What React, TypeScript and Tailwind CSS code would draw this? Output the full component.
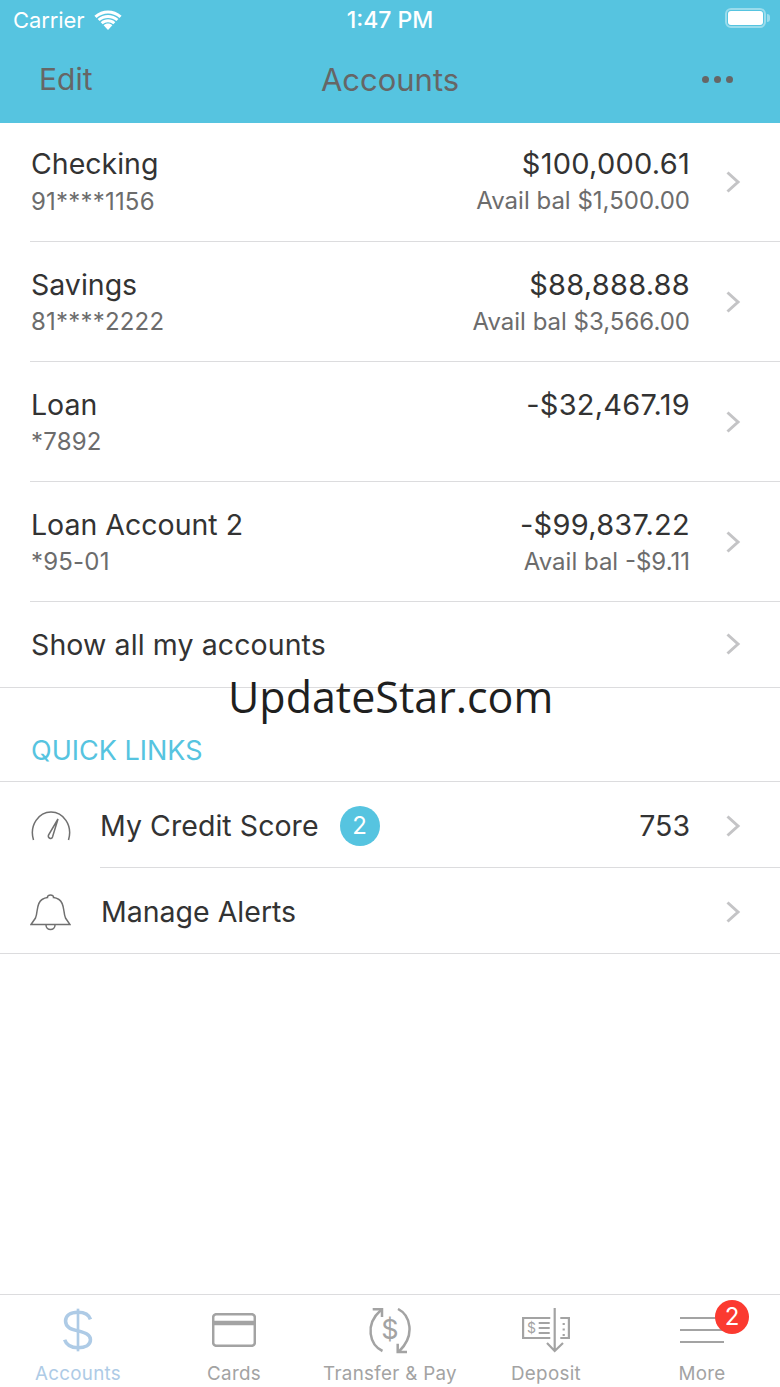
const ACCOUNTS = [
  { name: "Checking", number: "91****1156", amount: "$100,000.61", avail: "Avail bal $1,500.00" },
  { name: "Savings", number: "81****2222", amount: "$88,888.88", avail: "Avail bal $3,566.00" },
  { name: "Loan", number: "*7892", amount: "-$32,467.19", avail: "" },
  { name: "Loan Account 2", number: "*95-01", amount: "-$99,837.22", avail: "Avail bal -$9.11" },
];

function Chevron() {
  return (
    <svg width="16" height="24" viewBox="0 0 16 24" fill="none" className="shrink-0">
      <path d="M2.5 2.5 L13 12 L2.5 21.5" stroke="#c4c4c6" strokeWidth="3" />
    </svg>
  );
}

function StatusBar() {
  return (
    <div className="flex h-10 items-center justify-between pl-[13px] pr-[10px] text-[22px] text-white">
      <div className="flex items-center gap-[9px]">
        <span className="tracking-[-0.1px]">Carrier</span>
        <svg width="30" height="22" viewBox="0 0 30 22" fill="white">
          <path d="M15 21 L10.6 16.2 C13 14 17 14 19.4 16.2 Z" />
          <path d="M7.7 13.2 C11.7 9.4 18.3 9.4 22.3 13.2 L20.3 15.3 C17.3 12.6 12.7 12.6 9.7 15.3 Z" />
          <path d="M4.6 10 C10.4 4.6 19.6 4.6 25.4 10 L23.4 12.1 C18.7 7.9 11.3 7.9 6.6 12.1 Z" />
          <path d="M1.4 6.8 C9.2 -0.4 20.8 -0.4 28.6 6.8 L26.5 9 C19.9 3 10.1 3 3.5 9 Z" />
        </svg>
      </div>
      <span className="absolute left-1/2 -translate-x-1/2 text-[23px] font-medium">1:47 PM</span>
      <div className="mb-[4px] flex items-center gap-[1px]">
        <div className="flex h-[20px] w-[41px] items-center rounded-[6px] border-2 border-[#9adcec] p-[1px]">
          <div className="h-full w-full rounded-[3px] bg-white" />
        </div>
        <div className="h-[8px] w-[3px] rounded-r bg-[#9adcec]" />
      </div>
    </div>
  );
}

function NavBar() {
  return (
    <div className="relative flex h-[83px] items-start justify-between pl-[39px] pr-[47px] pt-[19px] text-[30px] leading-[40px] text-[#666666]">
      <span>Edit</span>
      <span className="absolute left-1/2 top-[20px] -translate-x-1/2 text-[31px]">Accounts</span>
      <div className="flex gap-[5px] pt-[17px]">
        <div className="h-[7px] w-[7px] rounded-full bg-[#666666]" />
        <div className="h-[7px] w-[7px] rounded-full bg-[#666666]" />
        <div className="h-[7px] w-[7px] rounded-full bg-[#666666]" />
      </div>
    </div>
  );
}

function AccountRow({ name, number, amount, avail }: { name: string; number: string; amount: string; avail: string }) {
  return (
    <div className="group flex h-[120px] items-center border-b border-[#dcdcde] pr-[39px] first:h-[119px]">
      <div className="flex-1 self-start pl-[1px] pt-[23px] group-first:pt-[21px]">
        <p className="text-[28.5px] leading-[40px] text-[#333333]">{name}</p>
        <p className="text-[24px] leading-[34px] tracking-[0.2px] text-[#6c6c6c] group-first:pt-[1px]">{number}</p>
      </div>
      <div className="mr-[35px] self-start pt-[23px] text-right group-first:pt-[21px]">
        <p className="text-[29px] leading-[40px] tracking-[0.25px] text-[#333333]">{amount}</p>
        {avail && <p className="text-[24px] leading-[34px] text-[#6c6c6c]">{avail}</p>}
      </div>
      <Chevron />
    </div>
  );
}

function TabItem({ label, active, children }: { label: string; active?: boolean; children: React.ReactNode }) {
  return (
    <div className="relative flex w-[156px] flex-col items-center">
      <div className="flex h-[67px] items-start">{children}</div>
      <span className={active ? "whitespace-nowrap leading-[24px] text-[#aecbe6]" : "whitespace-nowrap leading-[24px]"}>{label}</span>
    </div>
  );
}

function TabBar() {
  return (
    <div className="flex h-[93px] border-t border-[#dcdcde] text-[18.8px] tracking-[0.3px] text-[#a3a3a3]">
      <TabItem label="Accounts" active>
        <svg width="32" height="48" viewBox="0 0 36 50" fill="none" stroke="#aecbe6" strokeWidth="4" className="mt-[11px]">
          <path d="M18 1 V49" strokeWidth="3" />
          <path d="M32 13 C30 7 25 5 18 5 C9 5 4 9 4 15 C4 22 10 24 18 26 C26 28 32 30 32 36 C32 42 26 45 18 45 C10 45 5 42 3 36" />
        </svg>
      </TabItem>
      <TabItem label="Cards">
        <svg width="44" height="34" viewBox="0 0 44 34" fill="none" stroke="#a3a3a3" strokeWidth="2.5" className="mt-[18px]">
          <rect x="1.2" y="1.2" width="41.6" height="31.6" rx="3" />
          <path d="M1 10 H43" strokeWidth="4.5" />
        </svg>
      </TabItem>
      <TabItem label="Transfer & Pay">
        <svg width="46" height="46" viewBox="0 0 46 46" fill="none" stroke="#a3a3a3" strokeWidth="2.5" className="mt-[13px]">
          <path d="M15.5 43 C3 37 -3 17 14 2" />
          <path d="M5.7 1.3 L15 1 L15 9" />
          <path d="M31 1 C43 7 49 27 32 43.5" />
          <path d="M30.7 35.7 L30.7 44 L40 44" />
          <text x="23" y="31" fontSize="27" textAnchor="middle" fill="#a3a3a3" stroke="none" fontFamily="Inter, sans-serif">$</text>
        </svg>
      </TabItem>
      <TabItem label="Deposit">
        <svg width="48" height="46" viewBox="0 0 48 46" fill="none" stroke="#a3a3a3" strokeWidth="2.2" className="mt-[13px]">
          <path d="M28.3 10 H1.1 V30 H28.3 M38.3 10 H46.9 V30 H38.3" />
          <path d="M32.7 0 V43.5 M25 35 L32.7 43 L41 35" />
          <path d="M16.7 15 H27.7 M16.7 20 H27.7 M16.7 25 H27.7" />
          <path d="M41.7 15 V17 M41.7 20.5 V22.5 M41.7 26 V28" />
          <text x="5" y="25" fontSize="14" fill="#a3a3a3" stroke="none" fontFamily="Inter, sans-serif">$</text>
        </svg>
      </TabItem>
      <TabItem label="More">
        <div className="mt-[22px] flex h-[26px] w-[44px] flex-col justify-between">
          <div className="h-[2px] bg-[#a3a3a3]" />
          <div className="h-[2px] bg-[#a3a3a3]" />
          <div className="h-[2px] bg-[#a3a3a3]" />
        </div>
        <div className="absolute left-[91px] top-[5px] flex h-[34px] w-[34px] items-center justify-center rounded-full bg-[#fb3a30] text-[24px] tracking-normal text-white">
          2
        </div>
      </TabItem>
    </div>
  );
}

export default function App() {
  return (
    <div className="relative flex h-[1387px] w-[780px] flex-col overflow-hidden bg-white font-['Inter',sans-serif]">
      <header className="h-[123px] bg-[#56c4e0]">
        <StatusBar />
        <NavBar />
      </header>

      <main className="flex-1">
        <div className="pl-[30px]">
          {ACCOUNTS.map((a) => (
            <AccountRow key={a.name} {...a} />
          ))}
        </div>
        <div className="flex h-[86px] items-center justify-between border-b border-[#dcdcde] pb-[1px] pl-[31px] pr-[39px] text-[28.5px] text-[#333333]">
          <span className="pt-[2px] tracking-[0.1px]">Show all my accounts</span>
          <Chevron />
        </div>
        <div className="flex h-[94px] items-start border-b border-[#dcdcde] pl-[31px] pt-[43px] text-[27px] leading-[40px] text-[#56c4e0]">
          QUICK LINKS
        </div>
        <div className="flex h-[85px] items-center pl-[31px] pr-[39px] pt-[2px] text-[28.5px] text-[#333333]">
          <svg width="40" height="30" viewBox="0 0 40 30" fill="none" stroke="#707070" strokeWidth="1.5" className="mr-[29px] shrink-0">
            <path d="M2.5 29 C-2 14 8 1 20 1 C32 1 42 14 37.5 29" />
            <path d="M27 8 L17.5 24 C16.5 27 20.5 29 21.5 26 Z" />
          </svg>
          <span className="pt-[2px] tracking-[0.05px]">My Credit Score</span>
          <div className="ml-[21px] flex h-10 w-10 items-center justify-center rounded-full bg-[#56c4e0] text-[24px] text-white">2</div>
          <span className="ml-auto mr-[35px] pt-[2px]">753</span>
          <Chevron />
        </div>
        <div className="border-b border-[#dcdcde]">
          <div className="ml-[100px] border-t border-[#dcdcde]" />
          <div className="flex h-[85px] items-center pl-[30px] pr-[39px] pt-[2px] text-[28.5px] text-[#333333]">
            <svg width="41" height="38" viewBox="0 0 41 38" fill="none" stroke="#707070" strokeWidth="1.5" className="mr-[30px] shrink-0">
              <path d="M1 31.5 L5.5 25 C8 20 6 10 12 6.5 C14 5.2 16 4.6 17.5 4.5 C17 1 24 1 23.5 4.5 C25 4.6 27 5.2 29 6.5 C35 10 33 20 35.5 25 L40 31.5 Z" />
              <path d="M16 32 C16 38 25 38 25 32" />
            </svg>
            <span className="pt-[2px]">Manage Alerts</span>
            <div className="ml-auto"><Chevron /></div>
          </div>
        </div>
      </main>

      <TabBar />

      <div className="absolute left-[228px] top-[667px] font-['Open_Sans',sans-serif] text-[43px] leading-[60px] text-[#1f1f1f]">
        UpdateStar.com
      </div>
    </div>
  );
}
